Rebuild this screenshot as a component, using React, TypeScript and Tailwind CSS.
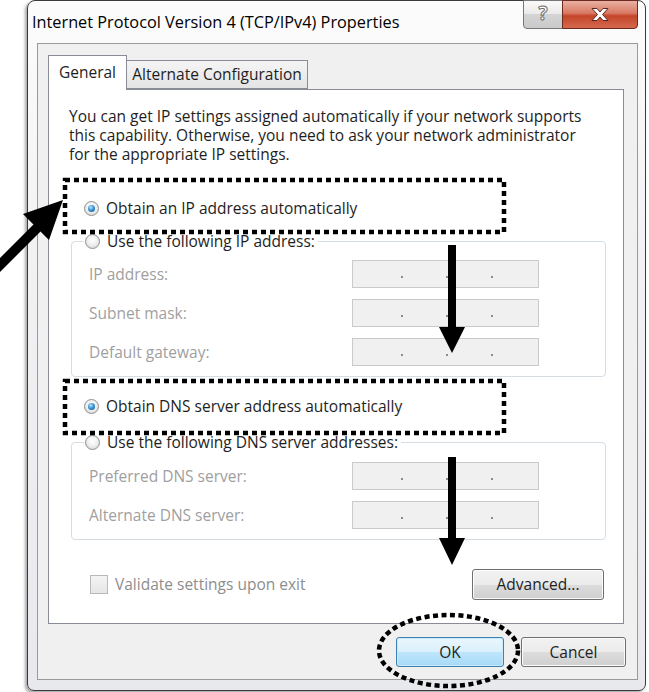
import React from 'react';

const Radio: React.FC<{ checked?: boolean }> = ({ checked }) => (
  <span className="flex h-[15px] w-[15px] shrink-0 items-center justify-center rounded-full border border-[#8e8f8f] bg-[radial-gradient(circle_at_50%_40%,#ffffff_0%,#f1f1f1_45%,#cdcdcd_100%)]">
    {checked && (
      <span className="h-[7px] w-[7px] rounded-full bg-[radial-gradient(circle_at_40%_35%,#c2e8fc_0%,#3d95d4_45%,#0e4f8e_100%)]" />
    )}
  </span>
);

// disabled ip address field, the three dots sit near the bottom
const IpBox = () => (
  <div className="flex h-[28px] w-[187px] items-end gap-[43px] border border-[#cacaca] bg-[#f0f0f0] pb-[9px] pl-[48px]">
    <span className="h-[2px] w-[2px] bg-[#8c8c8c]" />
    <span className="h-[2px] w-[2px] bg-[#8c8c8c]" />
    <span className="h-[2px] w-[2px] bg-[#8c8c8c]" />
  </div>
);

const FieldRow: React.FC<{ label: string }> = ({ label }) => (
  <div className="flex h-[28px] items-center">
    <span className="w-[263px] text-[#a0a0a0]">{label}</span>
    <IpBox />
  </div>
);

const Button: React.FC<{ label: string; primary?: boolean; className?: string }> = ({ label, primary, className = '' }) => (
  <div
    className={`flex items-center justify-center rounded-[3px] border ${
      primary
        ? 'border-[#3c7fb1] bg-[linear-gradient(to_bottom,#eaf6fd_0%,#d9f0fc_50%,#bee6fd_50%,#a7d9f5_100%)] shadow-[inset_0_0_0_1px_#c8ecfd]'
        : 'border-[#707070] bg-[linear-gradient(to_bottom,#f2f2f2_0%,#ebebeb_50%,#dddddd_50%,#cfcfcf_100%)] shadow-[inset_0_0_0_1px_#fbfbfb]'
    } ${className}`}
  >
    {label}
  </div>
);

const intro = [
  'You can get IP settings assigned automatically if your network supports',
  'this capability. Otherwise, you need to ask your network administrator',
  'for the appropriate IP settings.',
];

export default function App() {
  return (
    <div className="relative h-[692px] w-[649px] overflow-hidden bg-white font-['Open_Sans',sans-serif] text-[15.5px] leading-[19px] text-[#1e1e1e]">
      {/* window */}
      <div className="ml-[27px] flex h-[691px] w-[619px] flex-col rounded-t-[8px] rounded-b-[7px] border border-[#3b3b3b] bg-[linear-gradient(to_bottom,#fcfcfc,#f0f1f3_40%,#e7e9ec)] shadow-[-2px_2px_3px_rgba(0,0,0,0.35)]">
        {/* title bar */}
        <div className="flex h-[42px] shrink-0 items-start">
          <div className="pl-[4px] pt-[11px] text-[16.3px] leading-[20px] text-black">
            Internet Protocol Version 4 (TCP/IPv4) Properties
          </div>
          <div className="-mt-[1px] ml-auto mr-[7px] flex h-[29px]">
            <div className="flex w-[40px] items-center justify-center rounded-bl-[4px] border border-[#777] bg-[linear-gradient(to_bottom,#fafafa_0%,#e9e9e9_50%,#d4d4d4_50%,#cacaca_100%)] pb-[2px] text-[19px] font-bold leading-none text-white [-webkit-text-stroke:1px_#6a6a6a]">
              ?
            </div>
            <div className="-ml-[1px] flex w-[76px] items-center justify-center rounded-br-[4px] border border-[#6d2a1e] bg-[linear-gradient(to_bottom,#eab0a2_0%,#d87a63_45%,#c44529_55%,#d4694e_100%)]">
              <svg width="20" height="15" viewBox="0 0 20 15">
                <path
                  d="M2 1.5h5l3 3.5 3-3.5h5l-5.5 6 5.5 6h-5l-3-3.5-3 3.5h-5l5.5-6z"
                  fill="#ffffff"
                  stroke="#5a2a22"
                  strokeWidth="1"
                  strokeLinejoin="round"
                />
              </svg>
            </div>
          </div>
        </div>

        {/* client area */}
        <div className="mb-[10px] ml-[9px] mr-[7px] flex flex-1 flex-col border border-[#9a9a9a] bg-[#f0f0f0] pl-[10px] pr-[12px] pt-[11px]">
          {/* tabs */}
          <div className="flex h-[34px] items-end">
            <div className="relative z-10 -mb-[1px] flex h-[35px] w-[79px] items-center justify-center border border-b-0 border-[#898c95] bg-white pb-[2px]">
              General
            </div>
            <div className="-ml-[1px] flex h-[29px] w-[182px] items-center justify-center border border-[#898c95] bg-[linear-gradient(to_bottom,#f5f5f5,#e4e4e4)]">
              Alternate Configuration
            </div>
          </div>

          {/* tab panel */}
          <div className="flex h-[535px] w-[576px] flex-col border border-[#898c95] bg-white">
            <div className="ml-[20px] mt-[17px] flex flex-col">
              {intro.map((line) => (
                <div key={line} className="h-[19px] whitespace-nowrap leading-[19px]">
                  {line}
                </div>
              ))}
            </div>

            <div className="ml-[35px] mt-[34px] flex h-[20px] items-center gap-[7px]">
              <Radio checked />
              <span>Obtain an IP address automatically</span>
            </div>

            <div className="ml-[22px] mt-[23px] w-[535px] rounded-[4px] border border-[#d5dde3] pb-[10px]">
              <div className="-mt-[11px] ml-[12px] flex h-[20px] w-fit items-center gap-[7px] bg-white pl-[1px] pr-[3px]">
                <Radio />
                <span>Use the following IP address:</span>
              </div>
              <div className="ml-[17px] mt-[9px] flex flex-col gap-[11px]">
                <FieldRow label="IP address:" />
                <FieldRow label="Subnet mask:" />
                <FieldRow label="Default gateway:" />
              </div>
            </div>

            <div className="ml-[35px] mt-[19px] flex h-[20px] items-center gap-[7px]">
              <Radio checked />
              <span>Obtain DNS server address automatically</span>
            </div>

            <div className="ml-[22px] mt-[26px] w-[535px] rounded-[4px] border border-[#d5dde3] pb-[10px]">
              <div className="-mt-[11px] ml-[12px] flex h-[20px] w-fit items-center gap-[7px] bg-white pl-[1px] pr-[3px]">
                <Radio />
                <span>Use the following DNS server addresses:</span>
              </div>
              <div className="ml-[17px] mt-[10px] flex flex-col gap-[11px]">
                <FieldRow label="Preferred DNS server:" />
                <FieldRow label="Alternate DNS server:" />
              </div>
            </div>

            <div className="ml-[41px] mr-[19px] mt-[29px] flex h-[30px] items-center">
              <span className="h-[19px] w-[18px] border border-[#b9b9b9] bg-[linear-gradient(to_bottom,#f4f4f4,#e6e6e6)]" />
              <span className="ml-[7px] text-[#8d8d8d]">Validate settings upon exit</span>
              <Button label="Advanced..." className="ml-auto h-[31px] w-[132px]" />
            </div>
          </div>

          {/* dialog buttons */}
          <div className="-mr-[1px] mt-[13px] flex justify-end gap-[17px]">
            <Button label="OK" primary className="h-[30px] w-[108px]" />
            <Button label="Cancel" className="h-[30px] w-[105px]" />
          </div>
        </div>
      </div>

      {/* annotations drawn on top of the screenshot */}
      <svg className="pointer-events-none absolute inset-0" width="649" height="692" viewBox="0 0 649 692">
        <rect x="65" y="180" width="439" height="52" fill="none" stroke="#000" strokeWidth="4.5" strokeDasharray="5 4" />
        <rect x="65" y="381" width="439" height="52" fill="none" stroke="#000" strokeWidth="4.5" strokeDasharray="5 4" />
        <ellipse cx="448.5" cy="650.5" rx="69.5" ry="35.5" fill="none" stroke="#000" strokeWidth="4.5" strokeDasharray="5 3.5" />
        <polygon points="63,200 49,240 40.5,231.5 -7.5,279.5 -14.5,272.5 33.5,224.5 23,214" fill="#000" />
        <polygon points="448,245 456,245 456,327 465,327 452,353 439,327 448,327" fill="#000" />
        <polygon points="448,457 456,457 456,538 465,538 452,565 439,538 448,538" fill="#000" />
      </svg>
    </div>
  );
}
